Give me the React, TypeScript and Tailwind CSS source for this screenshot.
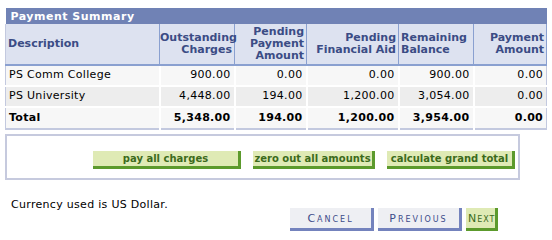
import React from 'react';

const rows = [
  { name: 'PS Comm College', out: '900.00', pend: '0.00', aid: '0.00', rem: '900.00', pay: '0.00', bg: 'bg-[#f7f7f7]' },
  { name: 'PS University', out: '4,448.00', pend: '194.00', aid: '1,200.00', rem: '3,054.00', pay: '0.00', bg: 'bg-[#ededed]' },
];

const GreenButton: React.FC<{ label: string; className?: string }> = ({ label, className }) => (
  <button
    className={`h-[18px] bg-[#dfeab5] border-r-[3px] border-b-[3px] border-[#5c9a2c] text-[#3c6a1c] font-bold text-[10px] leading-none whitespace-nowrap ${className ?? ''}`}
  >
    {label}
  </button>
);

export default function App() {
  return (
    <div className="w-[552px] h-[240px] bg-white text-[11px] text-black" style={{ fontFamily: '"DejaVu Sans", Verdana, sans-serif' }}>
      <div className="pt-[8px] pl-[5px]">
        <table className="w-[541px] border-collapse table-fixed">
          <colgroup>
            <col className="w-[154px]" />
            <col className="w-[75px]" />
            <col className="w-[72px]" />
            <col className="w-[92px]" />
            <col className="w-[75px]" />
            <col className="w-[73px]" />
          </colgroup>
          <thead>
            <tr>
              <th colSpan={6} className="h-[16px] bg-[#7082b5] text-white text-left font-bold text-[11px] leading-none pl-[5px] tracking-[0.5px]">
                Payment Summary
              </th>
            </tr>
            <tr className="h-[41px] bg-[#dde2f0] text-[#3b4c85] font-bold leading-[12px]">
              <th className="text-left pl-[2px] border-l border-[#c3c9df] border-b-2 border-b-[#8aa0d0] align-middle">Description</th>
              <th className="text-right pr-[2px] border-l border-[#8aa0d0] border-b-2 align-middle">Outstanding<br />Charges</th>
              <th className="text-right pr-[2px] border-l border-[#8aa0d0] border-b-2 align-middle">Pending<br />Payment<br />Amount</th>
              <th className="text-right pr-[2px] border-l border-[#8aa0d0] border-b-2 align-middle">Pending<br />Financial Aid</th>
              <th className="text-left pl-[2px] border-l border-[#8aa0d0] border-b-2 align-middle">Remaining<br />Balance</th>
              <th className="text-right pr-[2px] border-l border-r border-[#8aa0d0] border-b-2 align-middle">Payment<br />Amount</th>
            </tr>
          </thead>
          <tbody className="tracking-[0.3px]">
            {rows.map((r) => (
              <tr key={r.name} className={`h-[21px] ${r.bg} border-b-2 border-white`}>
                <td className="pl-[3px] border-l border-[#c3c9df]">{r.name}</td>
                <td className="text-right pr-[3px] border-l-2 border-white">{r.out}</td>
                <td className="text-right pr-[3px] border-l-2 border-white">{r.pend}</td>
                <td className="text-right pr-[3px] border-l-2 border-white">{r.aid}</td>
                <td className="text-right pr-[3px] border-l-2 border-white">{r.rem}</td>
                <td className="text-right pr-[3px] border-l-2 border-white border-r border-r-[#c3c9df]">{r.pay}</td>
              </tr>
            ))}
            <tr className="h-[22px] bg-[#f7f7f7] font-bold border-b-2 border-b-[#c3c9df]">
              <td className="pl-[3px] border-l border-[#c3c9df]">Total</td>
              <td className="text-right pr-[3px] border-l-2 border-white">5,348.00</td>
              <td className="text-right pr-[3px] border-l-2 border-white">194.00</td>
              <td className="text-right pr-[3px] border-l-2 border-white">1,200.00</td>
              <td className="text-right pr-[3px] border-l-2 border-white">3,954.00</td>
              <td className="text-right pr-[3px] border-l-2 border-white border-r border-r-[#c3c9df]">0.00</td>
            </tr>
          </tbody>
        </table>

        <div className="mt-[4px] w-[515px] h-[46px] border-2 border-[#c6cade] flex items-start pt-[15px] pl-[86px] gap-[12px]">
          <GreenButton label="pay all charges" className="w-[148px]" />
          <GreenButton label="zero out all amounts" className="w-[122px]" />
          <GreenButton label="calculate grand total" className="w-[128px]" />
        </div>

        <div className="flex items-start">
          <div className="mt-[18px] pl-[6px] w-[285px] tracking-[0.3px] leading-[13px]">Currency used is US Dollar.</div>
          <div className="flex gap-[4px] mt-[28px]">
            <button className="w-[84px] h-[23px] bg-[#eeeff3] border-r-[3px] border-b-[3px] border-[#7483bd] text-[#3d4c8a] text-[11px] tracking-[2px] [font-variant:small-caps] pt-[2px]">
              Cancel
            </button>
            <button className="w-[84px] h-[23px] bg-[#eeeff3] border-r-[3px] border-b-[3px] border-[#7483bd] text-[#3d4c8a] text-[11px] tracking-[2px] [font-variant:small-caps] pt-[2px]">
              Previous
            </button>
            <button className="w-[32px] h-[23px] bg-[#dfeab5] border-r-[3px] border-b-[3px] border-[#5c9a2c] text-[#3c6a1c] text-[11px] tracking-[1px] [font-variant:small-caps] pt-[2px] text-left pl-[2px]">
              Next
            </button>
          </div>
        </div>
      </div>
    </div>
  );
}
